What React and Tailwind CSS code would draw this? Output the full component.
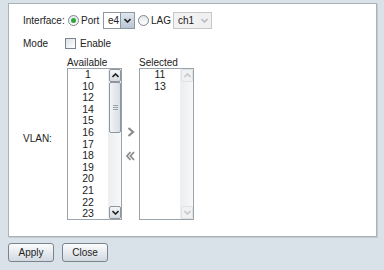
const available = ['1', '10', '12', '14', '15', '16', '17', '18', '19', '20', '21', '22', '23'];
const selected = ['11', '13'];

const Chevron = ({ dir = 'down', color = '#222' }) => (
  <svg width="7" height="5" viewBox="0 0 7 5">
    <path
      d={dir === 'down' ? 'M0.5 1 L3.5 4 L6.5 1' : 'M0.5 4 L3.5 1 L6.5 4'}
      fill="none"
      stroke={color}
      strokeWidth="1.6"
    />
  </svg>
);

const Radio = ({ checked }) => (
  <span className="flex items-center justify-center w-[11px] h-[11px] rounded-full border border-[#7a8590] bg-gradient-to-b from-[#e4e8ec] to-white">
    {checked && <span className="w-[5px] h-[5px] rounded-full bg-[#2fa53a]" />}
  </span>
);

const Select = ({ value, width, disabled }) => (
  <div
    className={`flex items-stretch h-[17px] border ${disabled ? 'border-[#c4c8cc] bg-[#f2f2f2]' : 'border-[#8e969e] bg-white'} ${width}`}
  >
    <span className="flex-1 pl-[4px] leading-[15px] text-[#222]">{value}</span>
    <span
      className={`flex items-center justify-center w-[14px] ${disabled ? 'bg-[#f0f0f0]' : 'bg-gradient-to-b from-[#dfe6f0] to-[#b9c5d4] border-l border-[#8e969e]'}`}
    >
      <Chevron color={disabled ? '#b8bcc0' : '#222'} />
    </span>
  </div>
);

const ScrollBar = ({ enabled }) => (
  <div className="flex flex-col w-[13px] bg-gradient-to-r from-[#eceef0] to-[#f7f8f9] border-l border-[#eef0f2]">
    <div
      className={`flex items-center justify-center h-[13px] rounded-[2px] ${enabled ? 'border border-[#8d959e] bg-gradient-to-b from-[#f4f6f8] to-[#d5dbe2]' : 'bg-[#f0f1f2] border border-[#dfe2e5]'}`}
    >
      <Chevron dir="up" color={enabled ? '#222' : '#c4c8cc'} />
    </div>
    {enabled && (
      <div className="flex items-center justify-center h-[51px] rounded-[2px] border border-[#8d959e] bg-gradient-to-r from-[#f2f4f6] to-[#d8dee4]">
        <span className="flex flex-col gap-[1px]">
          <span className="w-[5px] h-px bg-[#9aa2aa]" />
          <span className="w-[5px] h-px bg-[#9aa2aa]" />
          <span className="w-[5px] h-px bg-[#9aa2aa]" />
        </span>
      </div>
    )}
    <div className="flex-1" />
    <div
      className={`flex items-center justify-center h-[13px] rounded-[2px] ${enabled ? 'border border-[#8d959e] bg-gradient-to-b from-[#f4f6f8] to-[#d5dbe2]' : 'bg-[#f0f1f2] border border-[#dfe2e5]'}`}
    >
      <Chevron color={enabled ? '#222' : '#c4c8cc'} />
    </div>
  </div>
);

const ListBox = ({ title, items, scrollable }) => (
  <div className="flex flex-col w-[55px]">
    <span className="h-[11px] leading-[11px] text-[#222]">{title}</span>
    <div className="flex h-[152px] border border-[#9aa3ac] bg-white overflow-hidden">
      <ul className="flex-1 flex flex-col items-center text-[10.5px] leading-[11.6px] text-[#222] overflow-hidden">
        {items.map((item) => (
          <li key={item}>{item}</li>
        ))}
      </ul>
      <ScrollBar enabled={scrollable} />
    </div>
  </div>
);

const App = () => {
  return (
    <div className="w-[384px] h-[270px] bg-[#d9e1e9] pt-[3px] font-['Liberation_Sans',Arial,sans-serif] text-[10px] text-[#222]">
      <div className="ml-2 w-[369px] h-[234px] bg-white border border-[#a9b1b9] shadow-[1px_1px_0_#c3cad1] pl-[14px] pt-2">
        <div className="flex items-center h-[17px]">
          <span className="w-[45px]">Interface:</span>
          <Radio checked />
          <span className="ml-[2px] w-[22px]">Port</span>
          <Select value="e4" width="w-[32px]" />
          <span className="ml-[3px]">
            <Radio />
          </span>
          <span className="ml-[2px] w-[22px]">LAG</span>
          <Select value="ch1" width="w-[39px]" disabled />
        </div>

        <div className="flex items-center h-4 mt-[6px]">
          <span className="w-[42px]">Mode</span>
          <span className="w-[11px] h-[11px] border border-[#7a8590] bg-gradient-to-br from-[#dde2e7] to-white" />
          <span className="ml-[4px]">Enable</span>
        </div>

        <div className="flex mt-[6px]">
          <div className="w-[44px] flex items-center">VLAN:</div>
          <ListBox title="Available" items={available} scrollable />
          <div className="w-[17px] flex flex-col items-center justify-center gap-[14px] pt-[11px]">
            <svg width="8" height="10" viewBox="0 0 8 10">
              <path d="M1.5 1 L6 5 L1.5 9" fill="none" stroke="#8c8c8c" strokeWidth="2.2" />
            </svg>
            <svg width="9" height="10" viewBox="0 0 9 10">
              <path d="M4.5 1 L1 5 L4.5 9 M8 1 L4.5 5 L8 9" fill="none" stroke="#8c8c8c" strokeWidth="1.8" />
            </svg>
          </div>
          <ListBox title="Selected" items={selected} />
        </div>
      </div>

      <div className="flex gap-2 ml-2 mt-[6px]">
        <button className="w-[46px] h-[19px] rounded-[3px] border border-[#7b848d] bg-gradient-to-b from-[#fbfcfd] to-[#d2d9e0] text-[#222] leading-none">
          Apply
        </button>
        <button className="w-[46px] h-[19px] rounded-[3px] border border-[#7b848d] bg-gradient-to-b from-[#fbfcfd] to-[#d2d9e0] text-[#222] leading-none">
          Close
        </button>
      </div>
    </div>
  );
};

export default App;
